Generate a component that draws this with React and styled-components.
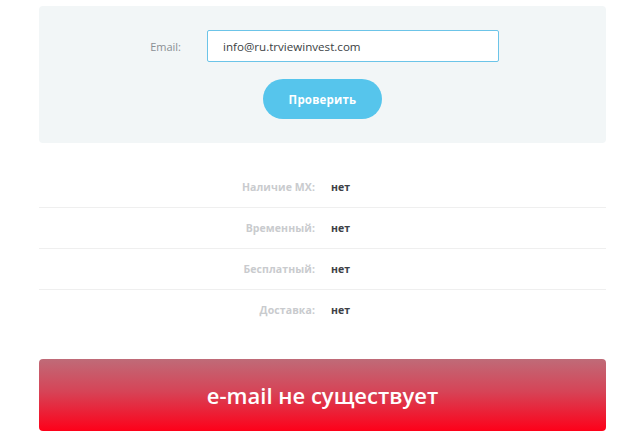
import React from 'react';
import styled, { createGlobalStyle } from 'styled-components';

const GlobalStyle = createGlobalStyle`
  body {
    margin: 0;
    background: #fff;
    font-family: "Open Sans", "Liberation Sans", sans-serif;
  }
`;

const Page = styled.div`
  width: 567px;
  padding: 6px 0 0 39px;
`;

const CheckPanel = styled.form`
  background: #f2f6f7;
  border-radius: 4px;
  padding: 24px 0;
  display: flex;
  flex-direction: column;
  align-items: center;
  gap: 17px;
`;

const FieldRow = styled.div`
  align-self: stretch;
  display: flex;
  align-items: center;
`;

const FieldLabel = styled.label`
  width: 142px;
  margin-right: 26px;
  text-align: right;
  font-size: 11px;
  color: #8a8f94;
`;

const EmailInput = styled.input`
  box-sizing: border-box;
  width: 292px;
  height: 32px;
  padding: 0 15px;
  border: 1px solid #6cc4e8;
  border-radius: 2px;
  background: #fff;
  font-family: inherit;
  font-size: 11.6px;
  color: #3b3f44;
  outline: none;
`;

const CheckButton = styled.button`
  width: 119px;
  height: 40px;
  border: none;
  border-radius: 20px;
  background: #56c5ec;
  color: #fff;
  font-family: "Open Sans", "Liberation Sans", sans-serif;
  font-weight: 700;
  font-size: 11.5px;
  letter-spacing: 0.2px;
  cursor: pointer;
`;

const ResultList = styled.dl`
  margin: 24px 0 0;
`;

const ResultRow = styled.div`
  display: flex;
  align-items: center;
  height: 40px;
  border-bottom: ${p => (p.$last ? 'none' : '1px solid #efefef')};
`;

const ResultKey = styled.dt`
  width: 276px;
  margin-right: 16px;
  text-align: right;
  font-size: 10.5px;
  font-weight: 700;
  letter-spacing: 0.1px;
  color: #c9cbce;
`;

const ResultValue = styled.dd`
  margin: 0;
  font-size: 10.5px;
  font-weight: 700;
  color: #3d4146;
`;

const Verdict = styled.div`
  margin-top: 29px;
  height: 72px;
  border-radius: 4px;
  background: linear-gradient(to bottom, #bf6b78 0%, #d64457 45%, #fe0019 100%);
  display: flex;
  align-items: center;
  justify-content: center;
  color: #fff;
  font-size: 22px;
  font-weight: 600;
`;

const results = [
  ['Наличие MX:', 'нет'],
  ['Временный:', 'нет'],
  ['Бесплатный:', 'нет'],
  ['Доставка:', 'нет'],
];

export default function App() {
  return (
    <>
      <GlobalStyle />
      <Page>
        <CheckPanel onSubmit={e => e.preventDefault()}>
          <FieldRow>
            <FieldLabel htmlFor="email">Email:</FieldLabel>
            <EmailInput id="email" defaultValue="info@ru.trviewinvest.com" />
          </FieldRow>
          <CheckButton type="submit">Проверить</CheckButton>
        </CheckPanel>
        <ResultList>
          {results.map(([k, v], i) => (
            <ResultRow key={k} $last={i === results.length - 1}>
              <ResultKey>{k}</ResultKey>
              <ResultValue>{v}</ResultValue>
            </ResultRow>
          ))}
        </ResultList>
        <Verdict>e-mail не существует</Verdict>
      </Page>
    </>
  );
}
